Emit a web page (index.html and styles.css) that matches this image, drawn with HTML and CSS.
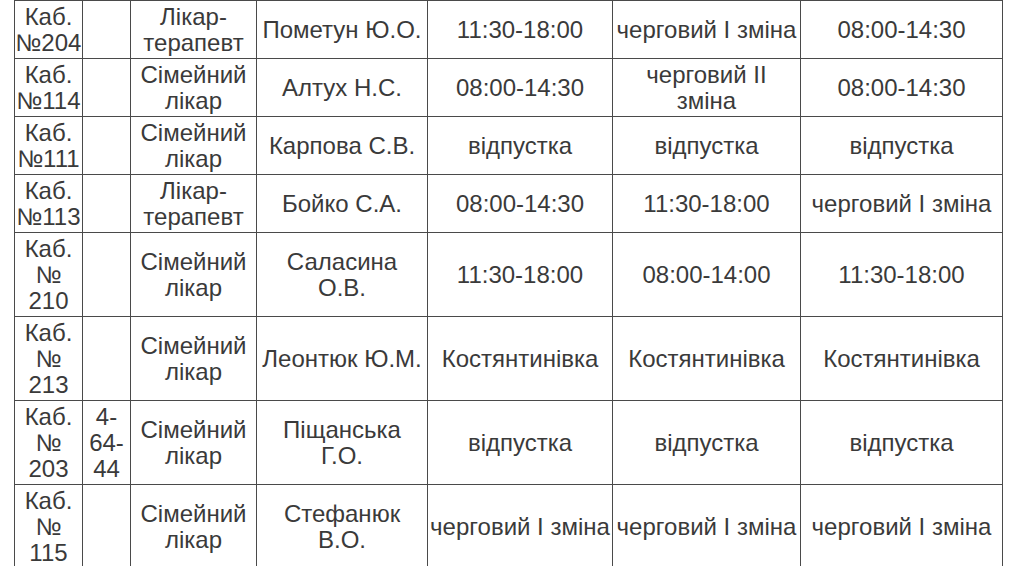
FILE: index.html
```html
<!DOCTYPE html>
<html lang="uk">
<head>
<meta charset="utf-8">
<title>Графік роботи</title>
<link rel="stylesheet" href="styles.css">
</head>
<body>
<table class="schedule">
  <colgroup>
    <col class="c-room">
    <col class="c-phone">
    <col class="c-role">
    <col class="c-name">
    <col class="c-d1">
    <col class="c-d2">
    <col class="c-d3">
  </colgroup>
  <tbody>
    <tr>
      <td>Каб. №204</td><td></td><td>Лікар-терапевт</td><td>Пометун Ю.О.</td>
      <td>11:30-18:00</td><td>черговий I зміна</td><td>08:00-14:30</td>
    </tr>
    <tr>
      <td>Каб. №114</td><td></td><td>Сімейний лікар</td><td>Алтух Н.С.</td>
      <td>08:00-14:30</td><td>черговий II<br>зміна</td><td>08:00-14:30</td>
    </tr>
    <tr>
      <td>Каб. №111</td><td></td><td>Сімейний лікар</td><td>Карпова С.В.</td>
      <td>відпустка</td><td>відпустка</td><td>відпустка</td>
    </tr>
    <tr>
      <td>Каб. №113</td><td></td><td>Лікар-терапевт</td><td>Бойко С.А.</td>
      <td>08:00-14:30</td><td>11:30-18:00</td><td>черговий I зміна</td>
    </tr>
    <tr>
      <td>Каб. № 210</td><td></td><td>Сімейний лікар</td><td>Саласина<br>О.В.</td>
      <td>11:30-18:00</td><td>08:00-14:00</td><td>11:30-18:00</td>
    </tr>
    <tr>
      <td>Каб. № 213</td><td></td><td>Сімейний лікар</td><td>Леонтюк Ю.М.</td>
      <td>Костянтинівка</td><td>Костянтинівка</td><td>Костянтинівка</td>
    </tr>
    <tr>
      <td>Каб. № 203</td><td>4-64-44</td><td>Сімейний лікар</td><td>Піщанська<br>Г.О.</td>
      <td>відпустка</td><td>відпустка</td><td>відпустка</td>
    </tr>
    <tr>
      <td>Каб. № 115</td><td></td><td>Сімейний лікар</td><td>Стефанюк<br>В.О.</td>
      <td>черговий I зміна</td><td>черговий I зміна</td><td>черговий I зміна</td>
    </tr>
  </tbody>
</table>
</body>
</html>
```

FILE: styles.css
```css
html, body {
  margin: 0;
  padding: 0;
  background: #ffffff;
}

body {
  font-family: "Liberation Sans", Arial, sans-serif;
  color: #3a3a3a;
  overflow: hidden;
}

.schedule {
  border-collapse: collapse;
  table-layout: fixed;
  width: 989px;
  margin: 0 0 0 14px;
  font-size: 24px;
  line-height: 26px;
}

.c-room  { width: 68px; }
.c-phone { width: 48px; }
.c-role  { width: 126px; }
.c-name  { width: 171px; }
.c-d1    { width: 185px; }
.c-d2    { width: 188px; }
.c-d3    { width: 202px; }

.schedule td {
  border: 1px solid #4a4a4a;
  padding: 3px 0 2px;
  text-align: center;
  vertical-align: middle;
  word-wrap: break-word;
}
```
